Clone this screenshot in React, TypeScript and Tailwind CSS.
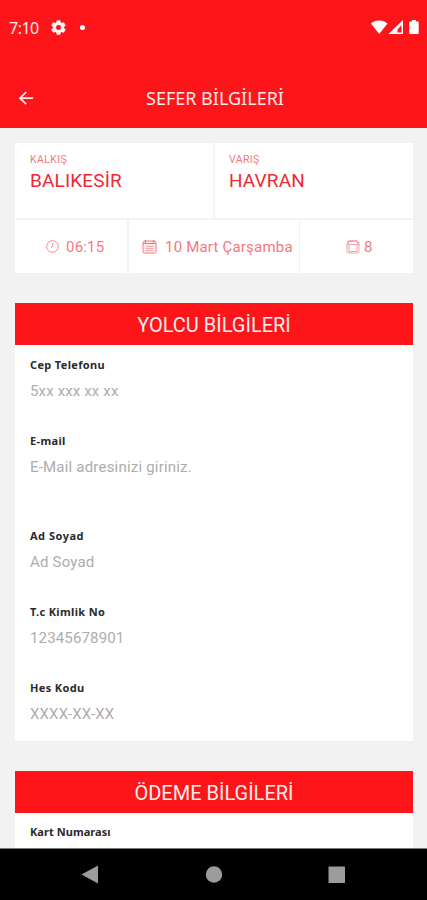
import React from 'react';

function Field({ label, value, labelClass = 'tracking-[0.35px]', valueClass = 'tracking-[0.15px]', className = '' }: { label: string; value?: string; labelClass?: string; valueClass?: string; className?: string }) {
  return (
    <div className={`flex flex-col items-start whitespace-nowrap pl-[15px] ${className}`}>
      <label className={`h-5 font-['Noto_Sans',sans-serif] text-[11px] font-bold leading-5 text-[#2a2a2a] ${labelClass}`}>{label}</label>
      {value && <div className={`mt-1.5 h-5 text-[15px] leading-5 text-[#adadad] ${valueClass}`}>{value}</div>}
    </div>
  );
}

function SectionTitle({ children, className = '' }: { children: React.ReactNode; className?: string }) {
  return <h2 className={`flex items-center justify-center bg-[#fe1519] text-[20px] leading-none text-[#ffeded] ${className}`}>{children}</h2>;
}

export default function App() {
  return (
    <div className="flex h-[900px] w-[427px] flex-col overflow-hidden bg-[#f2f2f2] font-['Roboto',sans-serif]">
      <header className="h-[128px] shrink-0 bg-[#fe1519] text-[#ffeaea]">
        <div className="flex h-[54px] items-center pl-[9px] pr-[7px]">
          <span className="mt-px w-[31px] whitespace-nowrap font-['Noto_Sans',sans-serif] text-[16px] leading-5 tracking-[-0.5px]">7:10</span>
          <svg className="ml-[10px] size-[17px]" viewBox="0 0 24 24" fill="white" stroke="white" strokeWidth=".6"><path d="M19.4 13c.1-.3.1-.6.1-1s0-.7-.1-1l2.100-1.600c.2-.2.300-.4.100-.7l-2-3.400c-.1-.3-.4-.3-.6-.3l-2.500 1c-.5-.4-1.100-.7-1.700-1L14.400 2.400c0-.2-.2-.4-.5-.4h-3.800c-.3 0-.5.200-.5.400L9.200 5c-.6.300-1.200.6-1.700 1L5 5c-.2-.1-.5 0-.6.200l-2 3.400c-.1.200-.1.500.1.700L4.600 11c0 .300-.1.700-.1 1s0 .700.1 1l-2.100 1.600c-.2.200-.2.400-.1.700l2 3.400c.1.200.4.300.6.200l2.500-1c.5.400 1.100.7 1.700 1l.4 2.600c0 .3.200.5.500.5h3.800c.3 0 .5-.2.500-.5l.4-2.600c.6-.3 1.200-.6 1.700-1l2.500 1c.2.100.5 0 .6-.2l2-3.400c.1-.300.1-.500-.1-.700L19.400 13ZM12 15.800a3.800 3.800 0 1 1 0-7.600 3.800 3.800 0 0 1 0 7.600Z" /></svg>
          <i className="ml-[13px] size-[5px] rounded-full bg-white" />
          <svg className="ml-auto h-[15px] w-[49px]" viewBox="0 0 49 15" fill="white">
            <path d="M0 3.500C4-.4 12-.4 16.500 3.500L8.200 14Z" />
            <path fillRule="evenodd" d="M17.500 14 32 0v14ZM26.500 12.500h4V5l-4 4.400Z" />
            <path d="M41 0h4v1.500h1.500c.8 0 1.200.4 1.200 1.200v10.100c0 .8-.4 1.200-1.200 1.200h-7c-.8 0-1.200-.4-1.200-1.200V2.700c0-.8.400-1.200 1.200-1.200H41Z" />
          </svg>
        </div>
        <div className="mt-[30px] flex h-7 items-center pl-[18px]">
          <svg className="size-4" viewBox="0 0 16 16" fill="none" stroke="currentColor" strokeWidth="1.800"><path d="M15.200 8.200H2M8.200 2.200 2 8.200l6.200 6" /></svg>
          <h1 className="ml-[112px] whitespace-nowrap font-['Noto_Sans',sans-serif] text-[18px] leading-7">SEFER BİLGİLERİ</h1>
        </div>
      </header>

      <main className="flex min-h-0 flex-1 flex-col overflow-hidden px-[15px] pt-[15px] pr-[14px]">
        <section className="h-[130px] shrink-0 bg-white text-[#f02832]">
          <div className="flex h-[77px] border-b-2 border-[#f4f4f4]">
            <div className="w-[200px] border-r-2 border-[#f4f4f4] pl-[15px] pt-[11px]">
              <div className="text-[10.500px] leading-3 tracking-[0.4px] text-[#f6777d]">KALKIŞ</div>
              <div className="mt-[3px] text-[19px] leading-6 tracking-[0.15px]">BALIKESİR</div>
            </div>
            <div className="pl-[14px] pt-[11px]">
              <div className="text-[10.500px] leading-3 tracking-[0.4px] text-[#f6777d]">VARIŞ</div>
              <div className="mt-[3px] text-[19px] leading-6 tracking-[0.15px]">HAVRAN</div>
            </div>
          </div>
          <div className="flex h-[53px] whitespace-nowrap text-[15px] leading-5 text-[#f4787f]">
            <div className="flex w-[114px] items-center border-r-2 border-[#f4f4f4] pl-[31px]">
              <svg className="mr-[7px] size-[13px]" viewBox="0 0 13 13" fill="none" stroke="currentColor" strokeWidth=".9"><circle cx="6.500" cy="6.500" r="5.800" /><path d="M7.300 3 6.200 6.500 5 8" /></svg>
              <span className="tracking-[0.2px]">06:15</span>
            </div>
            <div className="flex w-[171px] items-center border-r border-[#f0f0f0] pl-[13px]">
              <svg className="mr-2 h-[15px] w-[15px]" viewBox="0 0 15 15" fill="none" stroke="currentColor"><rect x="1" y="2" width="13" height="12" rx="1.500" fill="#fff0f0" /><path d="M1 4.500h13M3.500 1v3M11.500 1v3" strokeWidth="1.200" /><path d="M3.500 7.500h8M3.500 9.500h8M3.500 11.500h8" opacity=".6" /></svg>
              <span className="tracking-[0.2px]">10 Mart Çarşamba</span>
            </div>
            <div className="flex items-center pl-[46px]">
              <svg className="mr-1 h-[14px] w-[14px]" viewBox="0 0 14 14" fill="none" stroke="currentColor" strokeWidth=".7"><path d="M2.500 4V2Q2.500 .7 4 .7h6Q11.500 .7 11.500 2v2M1 5V3Q1 1.300 2.500 1.300h9Q13 1.300 13 3v2M1 5v6.500q0 1.500 1.500 1.500h9q1.500 0 1.500-1.500V5q-2-1-2 .5v6H3v-6Q3 4 1 5ZM3 4.500h8" /></svg>
              <span>8</span>
            </div>
          </div>
        </section>

        <section className="mt-[30px] h-[438px] shrink-0 bg-white">
          <SectionTitle className="h-[42px] pt-[2px]">YOLCU BİLGİLERİ</SectionTitle>
          <Field className="mt-[10px]" label="Cep Telefonu" value="5xx xxx xx xx" />
          <Field className="mt-[30px]" label="E-mail" value="E-Mail adresinizi giriniz." valueClass="tracking-[0.2px]" />
          <Field className="mt-[49px]" label="Ad Soyad" value="Ad Soyad" labelClass="tracking-[0.5px]" valueClass="tracking-[0.2px]" />
          <Field className="mt-[30px]" label="T.c Kimlik No" value="12345678901" />
          <Field className="mt-[30px]" label="Hes Kodu" value="XXXX-XX-XX" />
        </section>

        <section className="mt-[30px] h-[90px] shrink-0 bg-white">
          <SectionTitle className="h-[42px] pt-[2px]">ÖDEME BİLGİLERİ</SectionTitle>
          <Field className="mt-[9px]" label="Kart Numarası" labelClass="tracking-[0.05px]" />
        </section>
      </main>

      <nav className="h-[52px] shrink-0 border-t border-[#777] bg-black">
        <svg className="block h-[51px] w-[427px]" viewBox="0 849 427 51" fill="#9c9c9c"><path d="M81.500 874.500 98 865.500v18Z" /><circle cx="214" cy="874.500" r="8.200" /><rect x="328.500" y="866.500" width="16.500" height="16.500" rx=".5" /></svg>
      </nav>
    </div>
  );
}
